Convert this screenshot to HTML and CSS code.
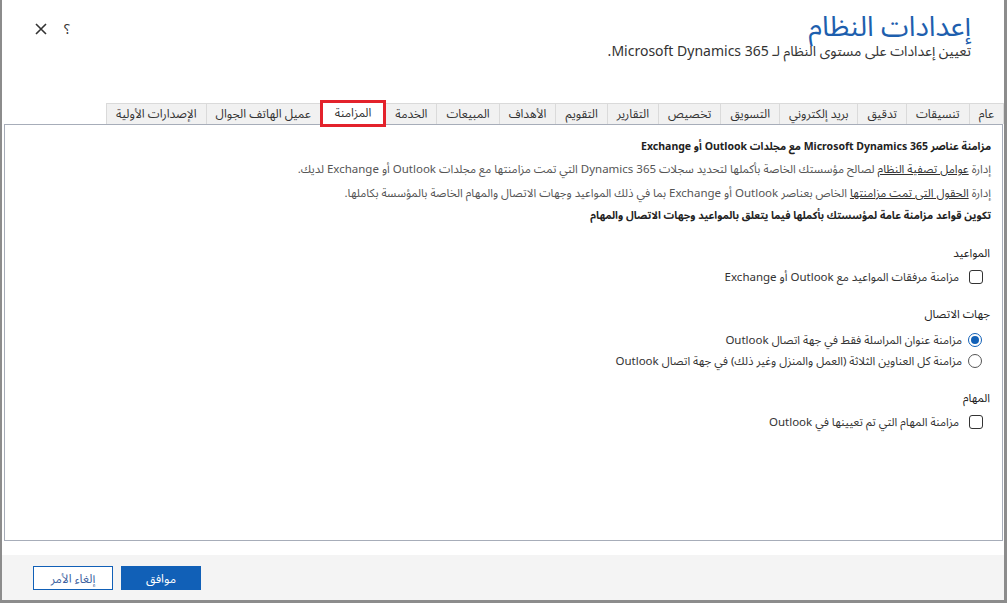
FILE: index.html
```html
<!DOCTYPE html>
<html lang="ar" dir="rtl">
<head>
<meta charset="utf-8">
<title>إعدادات النظام</title>
<link rel="stylesheet" href="styles.css">
</head>
<body>
<div class="dialog">
  <header class="header">
    <div class="titles">
      <h1 class="title">إعدادات النظام</h1>
      <p class="subtitle">تعيين إعدادات على مستوى النظام لـ Microsoft Dynamics 365.</p>
    </div>
    <div class="tools">
      <span class="help">؟</span>
      <svg class="close" width="12" height="12" viewBox="0 0 12 12"><path d="M1 1L11 11M11 1L1 11" stroke="#333" stroke-width="1.6" fill="none"/></svg>
    </div>
  </header>
  <nav class="tabs">
    <span class="tab">عام</span>
    <span class="tab">تنسيقات</span>
    <span class="tab">تدقيق</span>
    <span class="tab">بريد إلكتروني</span>
    <span class="tab">التسويق</span>
    <span class="tab">تخصيص</span>
    <span class="tab">التقارير</span>
    <span class="tab">التقويم</span>
    <span class="tab">الأهداف</span>
    <span class="tab">المبيعات</span>
    <span class="tab">الخدمة</span>
    <span class="tab active">المزامنة</span>
    <span class="tab">عميل الهاتف الجوال</span>
    <span class="tab">الإصدارات الأولية</span>
  </nav>
  <main class="panel">
    <p class="lead">مزامنة عناصر Microsoft Dynamics 365 مع مجلدات Outlook أو Exchange</p>
    <p class="para">إدارة <a class="link">عوامل تصفية النظام</a> لصالح مؤسستك الخاصة بأكملها لتحديد سجلات Dynamics 365 التي تمت مزامنتها مع مجلدات Outlook أو Exchange لديك.</p>
    <p class="para">إدارة <a class="link">الحقول التى تمت مزامنتها</a> الخاص بعناصر Outlook أو Exchange بما في ذلك المواعيد وجهات الاتصال والمهام الخاصة بالمؤسسة بكاملها.</p>
    <p class="lead lead-2">تكوين قواعد مزامنة عامة لمؤسستك بأكملها فيما يتعلق بالمواعيد وجهات الاتصال والمهام</p>

    <section class="group">
      <h2 class="group-title">المواعيد</h2>
      <label class="option"><span class="box"></span><span>مزامنة مرفقات المواعيد مع Outlook أو Exchange</span></label>
    </section>

    <section class="group">
      <h2 class="group-title">جهات الاتصال</h2>
      <label class="option radio-opt first"><span class="radio checked"></span><span>مزامنة عنوان المراسلة فقط في جهة اتصال Outlook</span></label>
      <label class="option radio-opt"><span class="radio"></span><span>مزامنة كل العناوين الثلاثة (العمل والمنزل وغير ذلك) في جهة اتصال Outlook</span></label>
    </section>

    <section class="group">
      <h2 class="group-title">المهام</h2>
      <label class="option"><span class="box"></span><span>مزامنة المهام التي تم تعيينها في Outlook</span></label>
    </section>
  </main>
  <footer class="footer">
    <button class="btn primary">موافق</button>
    <button class="btn secondary">إلغاء الأمر</button>
  </footer>
</div>
</body>
</html>
```
FILE: styles.css
```css
* { box-sizing: border-box; }
html, body { margin: 0; padding: 0; }
body {
  width: 1007px;
  height: 603px;
  background: #8c8c8c;
  font-family: "Segoe UI", "Noto Sans", "Noto Sans Arabic", "DejaVu Sans", sans-serif;
  color: #333;
  overflow: hidden;
}
.dialog {
  margin-right: 3px;
  margin-left: 2px;
  width: 1002px;
  height: 600px;
  background: #fff;
  display: flex;
  flex-direction: column;
}
.header {
  height: 102px;
  display: flex;
  justify-content: space-between;
  align-items: flex-start;
  padding: 8px 33px 0 31px;
}
.title {
  margin: 0;
  font-weight: normal;
  font-size: 28px;
  line-height: 35px;
  color: #1e5fae;
}
.subtitle {
  margin: 0;
  font-size: 14px;
  line-height: 16px;
  color: #333;
}
.tools {
  display: flex;
  align-items: center;
  gap: 17px;
  padding-top: 14px;
  padding-left: 2px;
}
.help { font-size: 14px; color: #333; line-height: 14px; }
.close { display: block; }
.tabs {
  display: flex;
  height: 22px;
  align-items: flex-end;
}
.tab {
  display: block;
  height: 21px;
  padding: 0 9px;
  font-size: 12px;
  line-height: 19px;
  color: #333;
  background: #f1f1f1;
  border: 1px solid #dadada;
  border-bottom: none;
  margin-left: -1px;
  white-space: nowrap;
}
.tab.active {
  background: #fff;
  border: 3px solid #e3222b;
  height: 27px;
  margin-bottom: -3px;
  line-height: 19px;
  padding: 0 12px;
  position: relative;
  z-index: 1;
}
.panel {
  margin-right: 1px;
  margin-left: 2px;
  height: 417px;
  border: 1px solid #a7adb9;
  padding: 10px 11px 0 12px;
  font-size: 11.5px;
}
.panel p { margin: 0; white-space: nowrap; }
.lead {
  font-weight: bold;
  font-size: 10.5px;
  color: #222;
  line-height: 22px;
}
.para {
  color: #555;
  line-height: 24px;
}
.link { color: #333; text-decoration: underline; }
.lead-2 { line-height: 20px; }
.group { margin-top: 17px; }
.group + .group { margin-top: 16px; }
.group-title {
  margin: 0 1px 0 0;
  font-size: 11.5px;
  font-weight: normal;
  color: #222;
  line-height: 22px;
}
.option {
  display: flex;
  align-items: center;
  gap: 10px;
  color: #333;
  line-height: 20px;
  margin-top: 3px;
  padding-right: 8px;
}
.radio-opt { gap: 6px; padding-right: 9px; margin-top: 0; line-height: 21px; }
.radio-opt.first { margin-top: 4px; }
.box {
  width: 14px;
  height: 14px;
  border: 1px solid #333;
  border-radius: 3px;
  background: #fff;
}
.radio {
  width: 14px;
  height: 14px;
  border: 1px solid #555;
  border-radius: 50%;
  background: #fff;
  position: relative;
}
.radio.checked { border-color: #1160b7; }
.radio.checked::after {
  content: "";
  position: absolute;
  top: 2px;
  right: 2px;
  width: 8px;
  height: 8px;
  border-radius: 50%;
  background: #1160b7;
}
.footer {
  margin-top: auto;
  height: 45px;
  background: #f4f4f4;
  display: flex;
  justify-content: flex-end;
  align-items: flex-start;
  gap: 8px;
  padding: 11px 31px 0 31px;
}
.btn {
  width: 80px;
  height: 24px;
  font-family: inherit;
  font-size: 12px;
  border: 1px solid #1160b7;
  padding: 0;
  cursor: pointer;
}
.primary { background: #1160b7; color: #fff; }
.secondary { background: #fff; color: #3b5fa0; }
```
